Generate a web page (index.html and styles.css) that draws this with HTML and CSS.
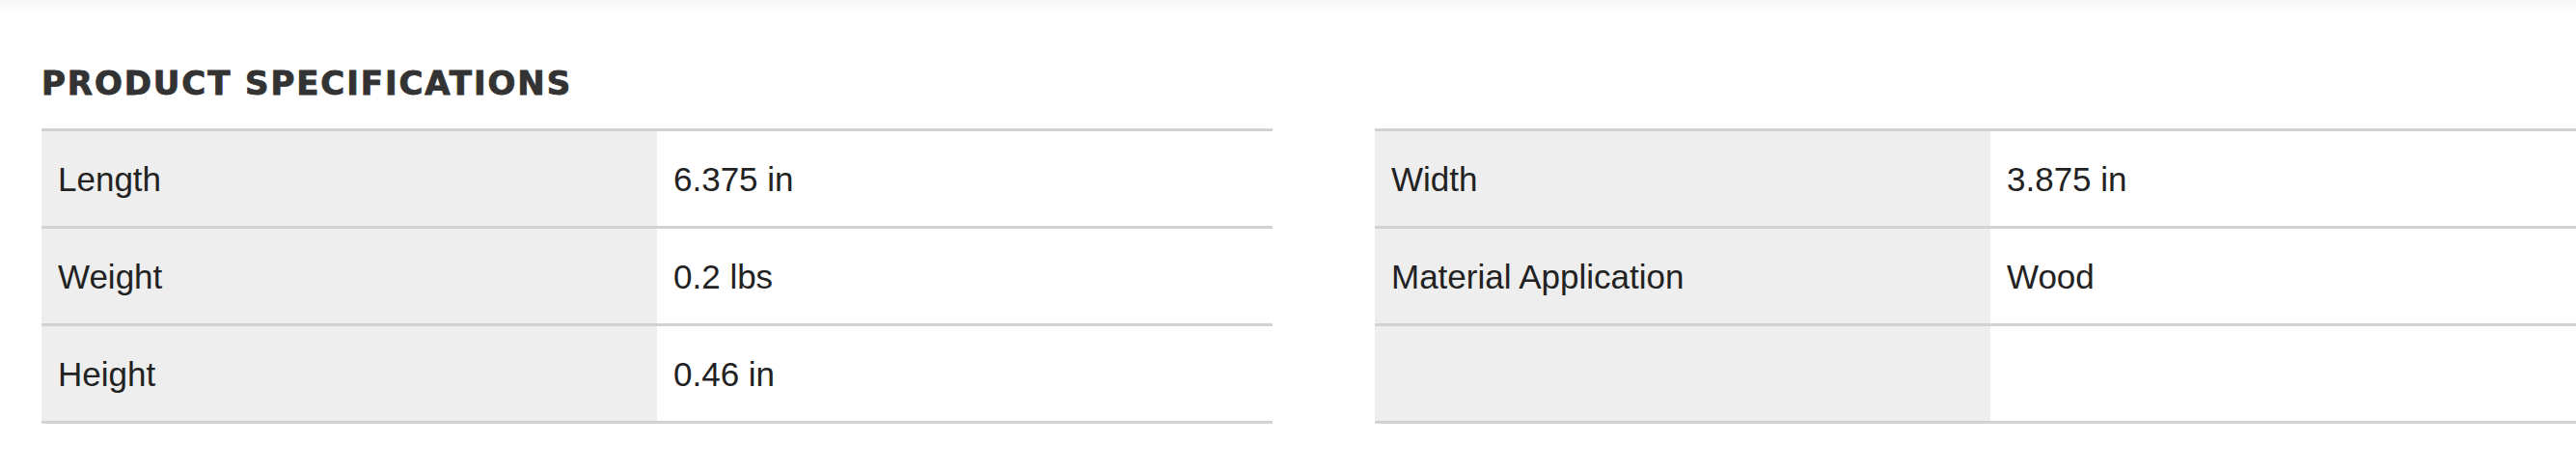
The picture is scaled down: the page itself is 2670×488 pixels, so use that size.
FILE: index.html
```html
<!DOCTYPE html>
<html lang="en">
<head>
<meta charset="utf-8">
<title>Product Specifications</title>
<link rel="stylesheet" href="styles.css">
</head>
<body>
<div class="top-shade"></div>
<section class="specs">
  <h2 class="specs-title">PRODUCT SPECIFICATIONS</h2>
  <div class="specs-tables">
    <div class="spec-table">
      <div class="spec-row"><div class="spec-label">Length</div><div class="spec-value">6.375 in</div></div>
      <div class="spec-row"><div class="spec-label">Weight</div><div class="spec-value">0.2 lbs</div></div>
      <div class="spec-row"><div class="spec-label">Height</div><div class="spec-value">0.46 in</div></div>
    </div>
    <div class="spec-table">
      <div class="spec-row"><div class="spec-label">Width</div><div class="spec-value">3.875 in</div></div>
      <div class="spec-row"><div class="spec-label">Material Application</div><div class="spec-value">Wood</div></div>
      <div class="spec-row"><div class="spec-label"></div><div class="spec-value"></div></div>
    </div>
  </div>
</section>
</body>
</html>
```
FILE: styles.css
```css
html, body {
  margin: 0;
  padding: 0;
  background: #ffffff;
  overflow: hidden;
}
body {
  font-family: "Liberation Sans", Arial, sans-serif;
  color: #222222;
}
.top-shade {
  height: 14px;
  background: linear-gradient(to bottom, #f6f6f6, #ffffff);
}
.specs {
  padding: 52px 0 0 43px;
}
.specs-title {
  margin: 0 0 27px 0;
  font-family: "DejaVu Sans", "Liberation Sans", sans-serif;
  font-weight: bold;
  font-size: 34px;
  line-height: 40px;
  letter-spacing: 1.9px;
  color: #333333;
  -webkit-text-stroke: 0.9px #333333;
}
.specs-tables {
  display: flex;
  gap: 106px;
  width: 2700px;
}
.spec-table {
  flex: 0 0 1276px;
  border-top: 3px solid #d2d2d2;
}
.spec-row {
  display: grid;
  grid-template-columns: 638px 638px;
  height: 98px;
  border-bottom: 3px solid #d2d2d2;
}
.spec-label,
.spec-value {
  display: flex;
  align-items: center;
  font-size: 35px;
  line-height: 40px;
  padding-top: 2px;
  box-sizing: border-box;
}
.spec-label {
  background: #eeeeee;
  padding-left: 17px;
}
.spec-value {
  background: #ffffff;
  padding-left: 17px;
}
```
